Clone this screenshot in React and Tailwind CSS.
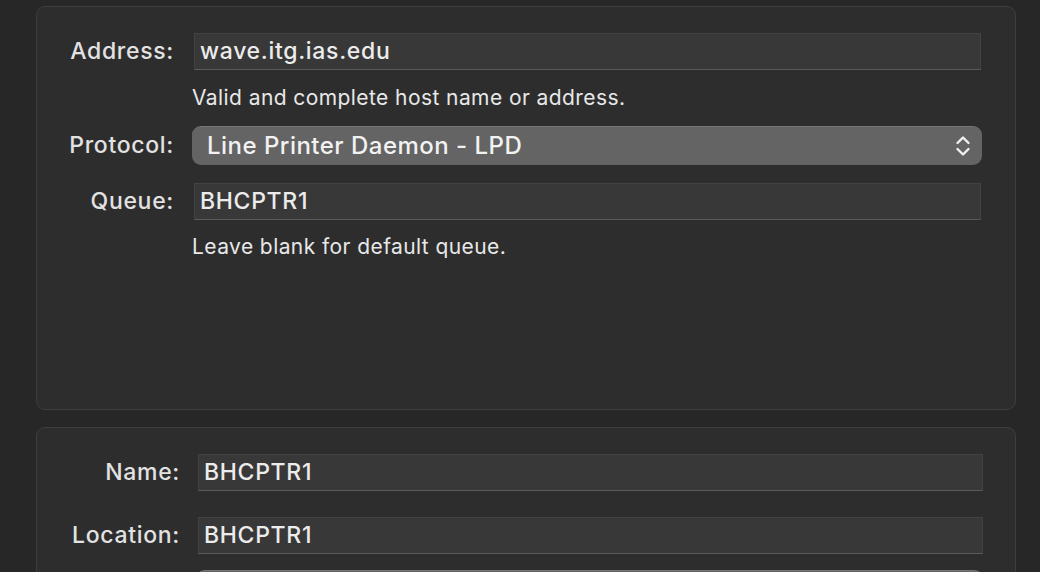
import React from 'react';

const font = { fontFamily: 'Inter, "Noto Sans", sans-serif' };

const TextField = ({ value }) => (
  <div className="flex-1 h-[37px] flex items-center px-[5px] bg-[#383838] border border-[#424242] border-b-[#5a5a5a] text-[23px] font-medium tracking-[0.03em] text-[#ececec]">
    {value}
  </div>
);

const UpDown = () => (
  <svg width="18" height="24" viewBox="0 0 18 24" fill="none" stroke="#f0f0f0" strokeWidth="2.4" strokeLinecap="round" strokeLinejoin="round">
    <path d="M3.5 9 L9 3.5 L14.5 9" />
    <path d="M3.5 15 L9 20.5 L14.5 15" />
  </svg>
);

const Label = ({ children, w = 'w-[137px]' }) => (
  <div className={`${w} text-right text-[23px] font-medium tracking-[0.03em] text-[#e2e2e2]`}>{children}</div>
);

const App = () => {
  return (
    <div className="w-[1040px] h-[572px] overflow-hidden bg-[#272727] pt-[6px] pl-[36px] pr-[24px] text-[#e6e6e6]" style={font}>
      {/* Connection panel */}
      <div className="h-[404px] rounded-[9px] bg-[#2d2d2d] border border-[#3e3e3e] pt-[26px] pr-[34px]">
        <div className="flex items-center">
          <Label>Address:</Label>
          <div className="ml-5 flex-1 flex">
            <TextField value="wave.itg.ias.edu" />
          </div>
        </div>
        <div className="ml-[155px] mt-[16px] text-[21px] leading-[24px] tracking-[0.02em] text-[#e8e8e8]">
          Valid and complete host name or address.
        </div>
        <div className="flex items-center mt-[16px]">
          <Label>Protocol:</Label>
          <div className="ml-[18px] flex-1 -mr-[1px] h-[39px] rounded-[9px] bg-[#646464] border-t border-[#747474] flex items-center justify-between pl-[15px] pr-[10px] text-[24px] font-medium tracking-[0.02em] text-[#f2f2f2]">
            <span>Line Printer Daemon - LPD</span>
            <UpDown />
          </div>
        </div>
        <div className="flex items-center mt-[18px]">
          <Label>Queue:</Label>
          <div className="ml-5 flex-1 flex">
            <TextField value="BHCPTR1" />
          </div>
        </div>
        <div className="ml-[155px] mt-[15px] text-[21px] leading-[24px] tracking-[0.02em] text-[#e8e8e8]">
          Leave blank for default queue.
        </div>
      </div>

      {/* Name panel */}
      <div className="mt-[17px] h-[200px] rounded-[9px] bg-[#2d2d2d] border border-[#3e3e3e] pt-[26px] pr-[32px]">
        <div className="flex items-center">
          <Label w="w-[143px]">Name:</Label>
          <div className="ml-[18px] flex-1 flex">
            <TextField value="BHCPTR1" />
          </div>
        </div>
        <div className="flex items-center mt-[26px]">
          <Label w="w-[143px]">Location:</Label>
          <div className="ml-[18px] flex-1 flex">
            <TextField value="BHCPTR1" />
          </div>
        </div>
        <div className="flex items-center mt-[16px]">
          <div className="w-[143px]" />
          <div className="ml-[16px] flex-1 h-[39px] rounded-[9px] bg-[#646464] border-t border-[#747474]" />
        </div>
      </div>
    </div>
  );
};

export default App;
